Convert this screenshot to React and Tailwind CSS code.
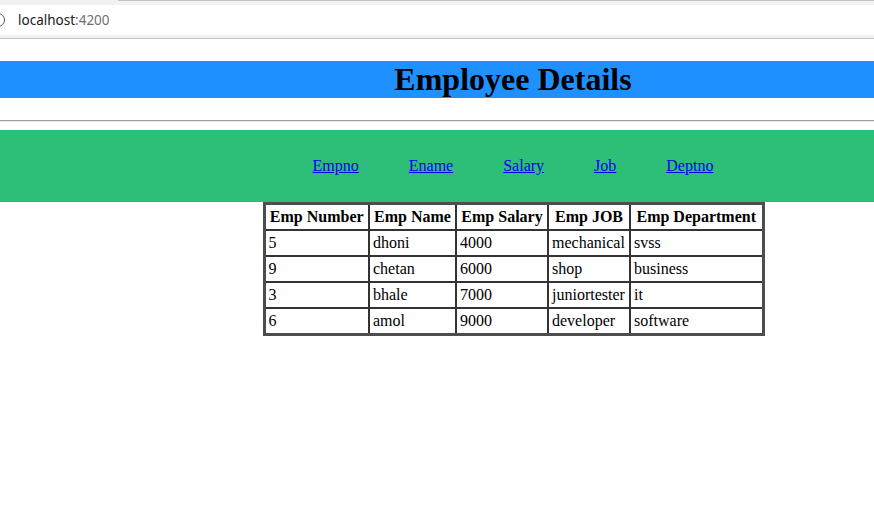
export default function App() {
  const rows = [
    ["5", "dhoni", "4000", "mechanical", "svss"],
    ["9", "chetan", "6000", "shop", "business"],
    ["3", "bhale", "7000", "juniortester", "it"],
    ["6", "amol", "9000", "developer", "software"],
  ];
  const heads = ["Emp Number", "Emp Name", "Emp Salary", "Emp JOB", "Emp Department"];
  const serif = { fontFamily: '"Liberation Serif", "Times New Roman", serif' };
  return (
    <div className="w-full min-h-[527px] bg-white overflow-hidden">
      {/* browser chrome */}
      <div className="h-[39px] bg-[#f1f1f1] border-b border-[#c3c3c3] flex flex-col">
        <div className="h-[1px] ml-[118px] bg-[#c3c3c3]" />
        <div className="h-[4px]" />
        <div className="h-[30px] bg-white flex items-center relative">
          <div className="absolute left-[-9px] top-[8px] w-[14px] h-[14px] rounded-full border border-[#555]" />
          <span
            className="ml-[18px] text-[13.5px] text-[#202020]"
            style={{ fontFamily: '"Noto Sans", "Open Sans", sans-serif' }}
          >
            localhost<span className="text-[#6f6f6f]">:4200</span>
          </span>
        </div>
      </div>
      {/* page */}
      <div className="w-[1026px]" style={serif}>
        <h1 className="mt-[22px] h-[37px] bg-[#1e90ff] text-center text-[32px] font-bold leading-[37px] text-black">
          Employee Details
        </h1>
        <div className="mt-[22px] h-[2px] border-t border-[#9e9e9e] bg-[#eeeeee]" />
        <div className="mt-[8px] h-[72px] bg-[#2dbe77] flex items-center justify-center gap-[50px]">
          {["Empno", "Ename", "Salary", "Job", "Deptno"].map((l) => (
            <a key={l} href="#" className="text-[16px] text-[#0000ee] underline leading-[18px]">
              {l}
            </a>
          ))}
        </div>
        <div className="flex justify-center pl-[1px]">
          <table className="table-fixed border-collapse w-[499px] border-[3px] border-[#4d4d4d] text-[16px] text-black">
            <colgroup>
              <col className="w-[105px]" />
              <col className="w-[87px]" />
              <col className="w-[92px]" />
              <col className="w-[82px]" />
              <col className="w-[133px]" />
            </colgroup>
            <thead>
              <tr className="h-[26px]">
                {heads.map((h) => (
                  <th key={h} className="border-2 border-[#333] px-[2px] py-0 font-bold text-center leading-[18px] whitespace-nowrap">
                    {h}
                  </th>
                ))}
              </tr>
            </thead>
            <tbody>
              {rows.map((r, i) => (
                <tr key={i} className={i === rows.length - 1 ? "h-[27px]" : "h-[26px]"}>
                  {r.map((c, j) => (
                    <td key={j} className="border-2 border-[#333] pl-[3px] pr-[1px] py-0 text-left leading-[18px] whitespace-nowrap">
                      {c}
                    </td>
                  ))}
                </tr>
              ))}
            </tbody>
          </table>
        </div>
      </div>
    </div>
  );
}
